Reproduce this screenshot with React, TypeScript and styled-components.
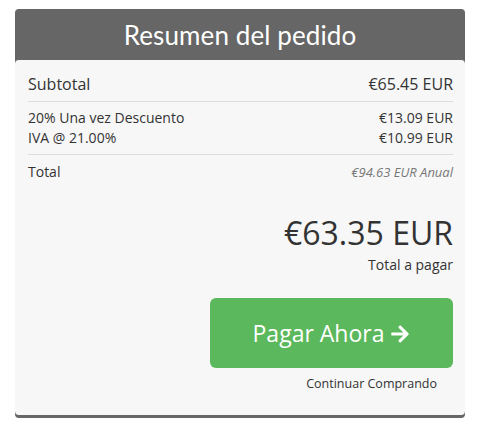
import React from 'react';
import styled, { createGlobalStyle } from 'styled-components';

const GlobalStyle = createGlobalStyle`
    html, body {
        margin: 0;
        padding: 0;
        background: #ffffff;
    }
    body {
        font-family: "Open Sans", "Liberation Sans", sans-serif;
        color: #333333;
    }
`;

// ---------------- <Page /> ---------------

const Page = styled.div`
    padding: 9px 20px 0 15px;
`;

// ---------------- <SummaryCard /> ---------------

const SummaryCard = styled.div`
    width: 450px;
    background-color: #666666;
    border-radius: 4px;
    padding-bottom: 3px;
`;

const SummaryHeader = styled.h2`
    margin: 0;
    height: 51px;
    display: flex;
    align-items: center;
    justify-content: center;
    color: #ffffff;
    font-family: Lato, "Open Sans", sans-serif;
    font-weight: 400;
    font-size: 26px;
    letter-spacing: 0.1px;
`;

const SummaryBody = styled.div`
    background-color: #f7f7f7;
    border-radius: 4px;
    padding: 10px 12px 22px 13px;
`;

// ---------------- <Row /> ---------------

const Row = styled.div<{ $size?: number }>`
    display: flex;
    justify-content: space-between;
    align-items: center;
    font-size: ${p => p.$size ?? 14}px;
    line-height: 20px;
`;

const RowGroup = styled.div<{ $pad?: string; $last?: boolean }>`
    padding: ${p => p.$pad ?? '6px 0'};
    border-bottom: ${p => (p.$last ? 'none' : '1px solid #dddddd')};
`;

const Recurring = styled.span`
    font-style: italic;
    color: #777777;
    font-size: 13px;
`;

// ---------------- <TotalDue /> ---------------

const TotalDue = styled.div`
    text-align: right;
    margin-top: 31px;
`;

const BigPrice = styled.div`
    font-size: 32px;
    line-height: 40px;
    color: #333333;
`;

const DueLabel = styled.div`
    font-size: 14px;
    line-height: 20px;
    margin-top: 2px;
`;

// ---------------- <Actions /> ---------------

const Actions = styled.div`
    display: flex;
    flex-direction: column;
    align-items: flex-end;
    margin-top: 23px;
`;

const PayButton = styled.button`
    width: 243px;
    height: 70px;
    border: none;
    border-radius: 6px;
    background-color: #5cb85c;
    color: #ffffff;
    font-family: "Open Sans", "Liberation Sans", sans-serif;
    font-size: 23px;
    display: flex;
    align-items: center;
    justify-content: center;
    gap: 6px;
    cursor: pointer;

    svg {
        width: 20px;
        height: 20px;
        margin-top: 1px;
    }
`;

const ContinueLink = styled.a`
    font-size: 12.5px;
    line-height: 18px;
    color: #333333;
    text-decoration: none;
    margin-top: 7px;
    margin-right: 16px;
`;

const ArrowRight = () => (
    <svg viewBox="0 0 448 512" fill="currentColor">
        <path d="M190.5 66.9l22.2-22.2c9.4-9.4 24.6-9.4 33.9 0L441 239c9.4 9.4 9.4 24.6 0 33.9L246.6 467.3c-9.4 9.4-24.6 9.4-33.9 0l-22.2-22.2c-9.5-9.5-9.3-25 .4-34.3L311.4 296H24c-13.3 0-24-10.7-24-24v-32c0-13.3 10.7-24 24-24h287.4L190.9 101.2c-9.8-9.3-10-24.8-.4-34.3z" />
    </svg>
);

export default function App() {
    return (
        <>
            <GlobalStyle />
            <Page>
                <SummaryCard>
                    <SummaryHeader>Resumen del pedido</SummaryHeader>
                    <SummaryBody>
                        <RowGroup $pad="4px 0 7px">
                            <Row $size={16}>
                                <span>Subtotal</span>
                                <span>€65.45 EUR</span>
                            </Row>
                        </RowGroup>
                        <RowGroup $pad="6px 0 6px">
                            <Row>
                                <span>20% Una vez Descuento</span>
                                <span>€13.09 EUR</span>
                            </Row>
                            <Row>
                                <span>IVA @ 21.00%</span>
                                <span>€10.99 EUR</span>
                            </Row>
                        </RowGroup>
                        <RowGroup $pad="7px 0 0" $last>
                            <Row>
                                <span>Total</span>
                                <Recurring>€94.63 EUR Anual</Recurring>
                            </Row>
                        </RowGroup>
                        <TotalDue>
                            <BigPrice>€63.35 EUR</BigPrice>
                            <DueLabel>Total a pagar</DueLabel>
                        </TotalDue>
                        <Actions>
                            <PayButton>
                                Pagar Ahora <ArrowRight />
                            </PayButton>
                            <ContinueLink href="#">Continuar Comprando</ContinueLink>
                        </Actions>
                    </SummaryBody>
                </SummaryCard>
            </Page>
        </>
    );
}
